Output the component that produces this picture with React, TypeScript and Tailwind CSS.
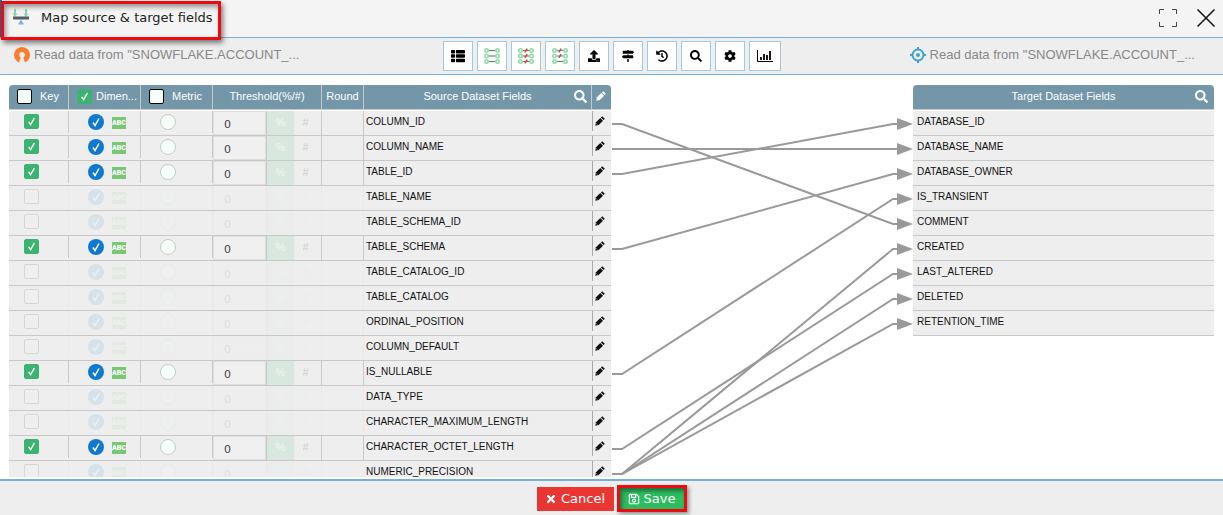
import React from "react";
import {
  FaCog,
  FaHistory,
  FaMapSigns,
  FaRegSave,
  FaSearch,
  FaThList,
  FaTimes,
  FaUpload,
} from "react-icons/fa";

const sourceFields = [
  { name: "COLUMN_ID", on: true },
  { name: "COLUMN_NAME", on: true },
  { name: "TABLE_ID", on: true },
  { name: "TABLE_NAME", on: false },
  { name: "TABLE_SCHEMA_ID", on: false },
  { name: "TABLE_SCHEMA", on: true },
  { name: "TABLE_CATALOG_ID", on: false },
  { name: "TABLE_CATALOG", on: false },
  { name: "ORDINAL_POSITION", on: false },
  { name: "COLUMN_DEFAULT", on: false },
  { name: "IS_NULLABLE", on: true },
  { name: "DATA_TYPE", on: false },
  { name: "CHARACTER_MAXIMUM_LENGTH", on: false },
  { name: "CHARACTER_OCTET_LENGTH", on: true },
  { name: "NUMERIC_PRECISION", on: false },
];

const targetFields = [
  "DATABASE_ID",
  "DATABASE_NAME",
  "DATABASE_OWNER",
  "IS_TRANSIENT",
  "COMMENT",
  "CREATED",
  "LAST_ALTERED",
  "DELETED",
  "RETENTION_TIME",
];

// [source row, target row]
const links: [number, number][] = [
  [0, 4],
  [1, 1],
  [2, 0],
  [5, 2],
  [10, 3],
  [13, 6],
  [14, 5],
  [14, 7],
  [14, 8],
];

const rowY = (row: number) => Math.min(39 + row * 25, 390);

function Tick({ className = "" }: { className?: string }) {
  return (
    <svg viewBox="0 0 16 16" className={`pointer-events-none absolute inset-0 h-full w-full ${className}`}>
      <path d="M5 8.500 7 11.500 11 4.500" fill="none" stroke="currentColor" strokeWidth="1.500" />
    </svg>
  );
}

function Pencil() {
  return (
    <svg viewBox="0 0 10 10" className="h-2.5 w-2.5" fill="currentColor" aria-hidden="true">
      <path d="M.3 9.700 1 6.300 5.300 2 8 4.700 3.700 9Z" />
      <path d="M5.900 1.400 7.200.2 9.800 2.800 8.600 4.100Z" />
      <path d="M1.300 7.500 2.500 8.700" stroke="#eee" strokeWidth=".6" />
    </svg>
  );
}

function HeaderBox({ label, checked }: { label: string; checked: boolean }) {
  return (
    <span className="relative block h-[15px] w-[15px] shrink-0">
      <input
        type="checkbox"
        aria-label={label}
        defaultChecked={checked}
        className="block h-[15px] w-[15px] appearance-none rounded-xs border border-black bg-[#f5fffa] checked:border-[#3cb371] checked:bg-[#3cb371]"
      />
      {checked && <Tick className="text-white" />}
    </span>
  );
}

function KeyBox({ label, checked }: { label: string; checked: boolean }) {
  return (
    <span className="relative block h-[15px] w-[15px]">
      <input
        type="checkbox"
        aria-label={label}
        defaultChecked={checked}
        className="block h-[15px] w-[15px] appearance-none rounded-xs border border-[#d6d6d6] bg-[#efefef] checked:border-[#3cb371] checked:bg-[#3cb371]"
      />
      {checked && <Tick className="text-white" />}
    </span>
  );
}

function Links() {
  return (
    <svg viewBox="0 0 302 392" preserveAspectRatio="none" className="block h-[392px] w-full" aria-hidden="true">
      {links.map(([from, to]) => (
        <g key={`${from}-${to}`}>
          <path
            d={`M1 ${rowY(from)}H11L282 ${rowY(to)}H290`}
            fill="none"
            stroke="#999"
            strokeWidth="2"
          />
          <path d={`M286 ${rowY(to) - 6}L302 ${rowY(to)}L286 ${rowY(to) + 6}Z`} fill="#999" />
        </g>
      ))}
    </svg>
  );
}

function LinkIcon({ kind }: { kind: "linked" | "broken" | "partial" }) {
  return (
    <svg viewBox="0 0 16 16" className="h-4 w-4" fill="none">
      {[2.5, 8, 13.5].map((y, i) => {
        const broken = kind === "broken" || (kind === "partial" && i < 2);
        const line = kind === "partial" && broken ? "#4aa3dc" : "#777";
        return (
          <g key={y}>
            <path d={`M5 ${y}H11`} stroke={line} strokeWidth="1.200" />
            {broken && <path d={`M6.800 ${y + 1.8}L9.200 ${y - 1.8}`} stroke="#e53935" strokeWidth="1.500" />}
            <circle cx="2.500" cy={y} r="1.700" stroke="#8fdba6" strokeWidth="1.600" />
            <circle cx="13.500" cy={y} r="1.700" stroke="#8fdba6" strokeWidth="1.600" />
          </g>
        );
      })}
    </svg>
  );
}

function ChartIcon() {
  return (
    <svg viewBox="0 0 16 12" className="h-3 w-4" fill="none" stroke="black">
      <path d="M.5 0V11.500H16" />
      <path d="M4 10V7M7 10V4M10 10V5M13 10V1" strokeWidth="1.800" />
    </svg>
  );
}

const tools: { label: string; icon: React.ReactNode; wide?: boolean }[] = [
  { label: "List", icon: <FaThList className="h-3.5 w-3.5" /> },
  { label: "Link all", icon: <LinkIcon kind="linked" /> },
  { label: "Unlink all", icon: <LinkIcon kind="broken" /> },
  { label: "Unlink selected", icon: <LinkIcon kind="partial" /> },
  { label: "Upload", icon: <FaUpload className="h-3 w-3" /> },
  { label: "Directions", icon: <FaMapSigns className="h-3 w-3" /> },
  { label: "History", icon: <FaHistory className="h-3 w-3" /> },
  { label: "Search", icon: <FaSearch className="h-3 w-3" /> },
  { label: "Settings", icon: <FaCog className="h-3 w-3" /> },
  { label: "Chart", icon: <ChartIcon />, wide: true },
];

const headCell = "flex h-[25px] items-center border-b border-[#c8c8c8] bg-[#7397a9] pb-0.5 text-[11px] font-normal text-white";

function SourceTable() {
  return (
    <table className="w-[602px] shrink-0 table-fixed border-separate border-spacing-0 self-start">
      <colgroup>
        <col className="w-[60px]" />
        <col className="w-[72px]" />
        <col className="w-[72px]" />
        <col className="w-[109px]" />
        <col className="w-[42px]" />
        <col />
        <col className="w-[19px]" />
      </colgroup>
      <thead>
        <tr>
          <th className="p-0 pb-px">
            <div className={`${headCell} gap-2 rounded-tl border-r border-r-[#c8c8c8] pl-2`}>
              <HeaderBox label="Select all keys" checked={false} />
              Key
            </div>
          </th>
          <th className="p-0 pb-px">
            <div className={`${headCell} gap-1 border-r border-r-[#c8c8c8] pl-2`}>
              <HeaderBox label="Select all dimensions" checked />
              Dimen...
            </div>
          </th>
          <th className="p-0 pb-px">
            <div className={`${headCell} gap-2 border-r border-r-[#c8c8c8] pl-2`}>
              <HeaderBox label="Select all metrics" checked={false} />
              Metric
            </div>
          </th>
          <th className="p-0 pb-px">
            <div className={`${headCell} justify-center border-r border-r-[#c8c8c8]`}>Threshold(%/#)</div>
          </th>
          <th className="p-0 pb-px">
            <div className={`${headCell} justify-center border-r border-r-[#c8c8c8]`}>Round</div>
          </th>
          <th className="p-0 pb-px">
            <div className={`${headCell} relative justify-center border-r border-r-[#c8c8c8]`}>
              Source Dataset Fields
              <button type="button" aria-label="Search source fields" className="absolute top-[5px] right-1">
                <FaSearch className="h-[13px] w-[13px]" />
              </button>
            </div>
          </th>
          <th className="p-0 pb-px">
            <div className={`${headCell} justify-center rounded-tr pr-0.5`}>
              <button type="button" aria-label="Edit all">
                <Pencil />
              </button>
            </div>
          </th>
        </tr>
      </thead>
      <tbody>
        {sourceFields.map(({ name, on }) => {
          const fade = on ? "" : "opacity-10";
          const cell = "border-b border-[#c8c8c8] bg-[#eee] p-0";
          return (
            <tr key={name}>
              <td className={cell}>
                <div className="relative flex h-6 pt-[3px] pl-[15px]">
                  <KeyBox label={`${name} key`} checked={on} />
                  <span className={`absolute top-0 right-0 h-[22px] w-px bg-[#c8c8c8] ${fade}`} />
                </div>
              </td>
              <td className={cell}>
                <div className={`relative flex h-6 gap-2 pt-[3px] pl-[19px] ${fade}`}>
                  <span className="relative block h-4 w-4">
                    <input
                      type="radio"
                      name={`${name}-role`}
                      aria-label={`${name} dimension`}
                      defaultChecked
                      className="block h-4 w-4 appearance-none rounded-full bg-[#0f78cf]"
                    />
                    <Tick className="text-white" />
                  </span>
                  <span className="mt-[3px] flex h-3 w-3.5 items-center justify-center bg-[#77c774] font-['Roboto',sans-serif] text-[7px] font-black text-white">
                    ABC
                  </span>
                  <span className="absolute top-0 right-0 h-[22px] w-px bg-[#c8c8c8]" />
                </div>
              </td>
              <td className={cell}>
                <div className={`relative flex h-6 pt-[3px] pl-[19px] ${fade}`}>
                  <input
                    type="radio"
                    name={`${name}-role`}
                    aria-label={`${name} metric`}
                    className="block h-4 w-4 appearance-none rounded-full border border-[#c8c8c8] bg-[#f5fffa]"
                  />
                  <span className="absolute top-0 right-0 h-[22px] w-px bg-[#c8c8c8]" />
                </div>
              </td>
              <td className={cell}>
                <div className={`flex h-6 text-[11px] ${fade}`}>
                  <input
                    type="text"
                    aria-label={`${name} threshold`}
                    defaultValue="0"
                    className="block h-6 w-[53px] border border-[#dedede] bg-[#f0f0f0] pt-0.5 pl-2.5 font-['DejaVu_Sans',sans-serif] text-[11px] text-[#444]"
                  />
                  <button type="button" className="w-7 border-l border-[#c8c8c8] bg-[#d8e8df] pb-0.5 text-[#f4f4f4]">
                    %
                  </button>
                  <button type="button" className="flex-1 border-r border-[#c8c8c8] pr-1 pb-0.5 text-[#cfcfcf]">
                    #
                  </button>
                </div>
              </td>
              <td className={cell}>
                <div className={`h-6 border-r border-[#c8c8c8] ${fade}`} />
              </td>
              <td className={cell}>
                <div className="h-6 pl-0.5 text-[10px] leading-[22px] text-[#111]">{name}</div>
              </td>
              <td className={cell}>
                <div className="flex h-6 items-start">
                  <button
                    type="button"
                    aria-label={`Edit ${name}`}
                    className="flex h-5 w-[19px] items-center border-l border-[#aaa] pl-0.5 text-[#111]"
                  >
                    <Pencil />
                  </button>
                </div>
              </td>
            </tr>
          );
        })}
      </tbody>
    </table>
  );
}

function TargetTable() {
  return (
    <table className="w-[301px] shrink-0 border-separate border-spacing-0 self-start">
      <thead>
        <tr>
          <th className="p-0 pb-px">
            <div className={`${headCell} relative justify-center rounded-t`}>
              Target Dataset Fields
              <button type="button" aria-label="Search target fields" className="absolute top-[5px] right-1.5">
                <FaSearch className="h-[13px] w-[13px]" />
              </button>
            </div>
          </th>
        </tr>
      </thead>
      <tbody>
        {targetFields.map((name) => (
          <tr key={name}>
            <td className="border-b border-[#c8c8c8] bg-[#eee] p-0">
              <div className="h-6 pl-1 text-[10px] leading-[22px] text-[#111]">{name}</div>
            </td>
          </tr>
        ))}
      </tbody>
    </table>
  );
}

export default function App() {
  return (
    <div className="flex h-screen flex-col overflow-hidden bg-white font-['Liberation_Sans',Arial,sans-serif]">
      <header className="relative flex h-[38px] shrink-0 items-center justify-between border-b border-[#7ab0d8] bg-[#f4f4f4] pr-2">
        <span className="absolute inset-y-0 left-0 w-0.5 bg-[#0b70bd]" />
        <div className="flex items-center gap-3 pb-0.5 pl-3">
          <svg viewBox="0 0 17 17" className="h-[17px] w-[17px]" aria-hidden="true">
            <path d="M2 0H4V4.500H5.500L3 8L.5 4.500H2ZM13 0H15V4.500H16.500L14 8L11.500 4.500H13Z" fill="#8fd3a8" />
            <path d="M1 7.500H17V10.500H1Z" fill="#555f66" />
            <path d="M9 10.500L12 15.500H6Z" fill="#7fb0d6" />
          </svg>
          <h1 className="font-['DejaVu_Sans',Verdana,sans-serif] text-[13px] text-[#222]">Map source &amp; target fields</h1>
        </div>
        <div className="flex items-center gap-5 pb-0.5">
          <button type="button" aria-label="Full screen">
            <svg viewBox="0 0 18 18" className="h-[18px] w-[18px]" fill="none" stroke="#444">
              <path d="M.5 5V.5H5M13 .5H17.500V5M17.500 13V17.500H13M5 17.500H.5V13" />
            </svg>
          </button>
          <button type="button" aria-label="Close">
            <svg viewBox="0 0 18 18" className="h-[18px] w-[18px]" fill="none" stroke="#111" strokeWidth="1.500">
              <path d="M.5.5 17.500 17.500M17.500.5.5 17.500" />
            </svg>
          </button>
        </div>
        <span className="pointer-events-none absolute top-px left-px z-10 h-[39px] w-[220px] border-3 border-[#ec0c10] shadow-[2px_3px_5px_rgba(0,0,0,0.5),inset_2px_3px_5px_rgba(0,0,0,0.4)]" />
      </header>

      <div className="flex h-[37px] shrink-0 items-center border-b border-[#7ab0d8] bg-[#eee] text-[13px] text-[#888]">
        <div className="flex-1">
          <div className="flex items-center gap-1 pb-0.5 pl-3.5">
            <svg viewBox="0 0 16 16" className="h-4 w-4" aria-hidden="true">
              <path
                d="M8 0A8 8 0 0 1 11 15.400L9.300 10.600A2.900 2.900 0 1 0 6.700 10.600L5 15.400A8 8 0 0 1 8 0Z"
                fill="#fb7e2e"
              />
            </svg>
            <span>Read data from "SNOWFLAKE.ACCOUNT_...</span>
          </div>
        </div>
        <div className="flex gap-1">
          {tools.map(({ label, icon, wide }) => (
            <button
              key={label}
              type="button"
              aria-label={label}
              className={`flex h-[30px] items-center justify-center border border-[#a3c9e2] bg-white text-black ${wide ? "w-8" : "w-[30px]"}`}
            >
              {icon}
            </button>
          ))}
        </div>
        <div className="flex-1">
          <div className="flex items-center justify-end gap-1 pr-7 pb-0.5">
            <svg viewBox="0 0 16 16" className="h-4 w-4" fill="none" stroke="#3ba3d0" aria-hidden="true">
              <circle cx="8" cy="8" r="5.500" strokeWidth="2" />
              <circle cx="8" cy="8" r="2" fill="#3ba3d0" stroke="none" />
              <path d="M8 0V3M8 13V16M0 8H3M13 8H16" strokeWidth="2" />
            </svg>
            <span>Read data from "SNOWFLAKE.ACCOUNT_...</span>
          </div>
        </div>
      </div>

      <main className="min-h-0 flex-1 pt-2.5 pb-0.5">
        <div className="flex h-full overflow-hidden px-[9px]">
          <SourceTable />
          <div className="min-w-0 flex-1">
            <Links />
          </div>
          <TargetTable />
        </div>
      </main>

      <footer className="flex h-9 shrink-0 items-start justify-center gap-[3px] border-t-2 border-[#7ab0d8] bg-[#eee] pt-1 font-['DejaVu_Sans',Verdana,sans-serif] text-[13px] text-white">
        <button type="button" className="mt-0.5 flex h-6 w-[77px] items-center justify-center gap-1 bg-[#e93633]">
          <FaTimes className="h-3 w-3" />
          Cancel
        </button>
        <button
          type="button"
          className="flex h-[27px] w-[70px] items-center justify-center gap-1 border-3 border-[#ec0c10] bg-[#2dbd60] shadow-[2px_2px_4px_rgba(0,0,0,0.4),inset_2px_3px_4px_rgba(0,0,0,0.4)]"
        >
          <FaRegSave className="h-3 w-3" />
          Save
        </button>
      </footer>
    </div>
  );
}
